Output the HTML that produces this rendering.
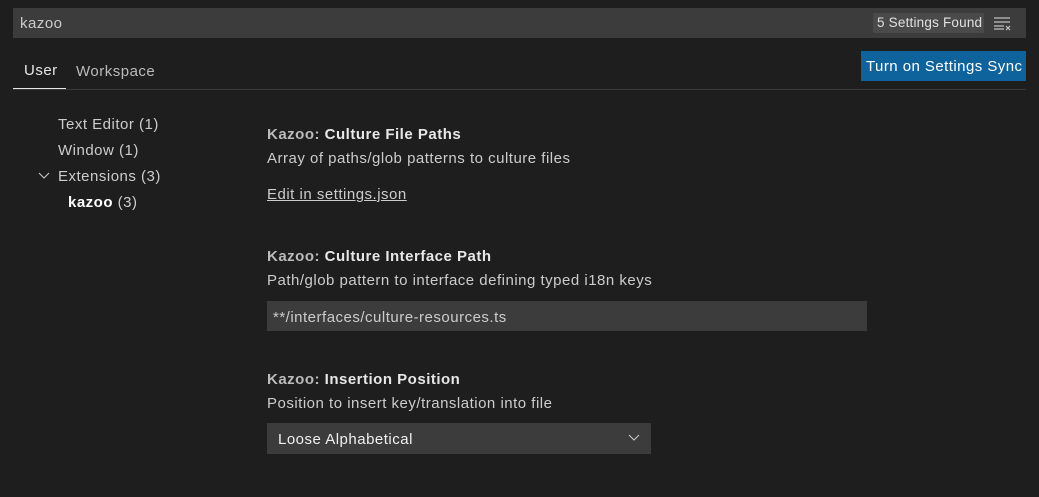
<!DOCTYPE html>
<html><head><style>
body{margin:0;width:1039px;height:497px;background:#1e1e1e;font-family:"Liberation Sans",sans-serif;font-size:15px;letter-spacing:0.5px;color:#cccccc;position:relative;overflow:hidden}
.a{position:absolute;white-space:nowrap}
</style></head><body>
<div class="a" style="left:13px;top:8px;width:1013px;height:30px;background:#3c3c3c"></div>
<div class="a" style="left:20px;top:15px;color:#ccc">kazoo</div>
<div class="a" style="left:873px;top:13px;width:111px;height:20px;background:#4a4a4a;border-radius:2px"></div>
<div class="a" style="left:877px;top:15px;font-size:13.5px;letter-spacing:0.2px;color:#e0e0e0">5 Settings Found</div>
<svg class="a" style="left:992px;top:15px" width="20" height="16"><g stroke="#c5c5c5" stroke-width="1.2"><line x1="2" y1="3" x2="18" y2="3"/><line x1="2" y1="7" x2="18" y2="7"/><line x1="2" y1="11" x2="12" y2="11"/><line x1="2" y1="14" x2="12" y2="14"/><line x1="14" y1="11" x2="18" y2="15"/><line x1="18" y1="11" x2="14" y2="15"/></g></svg>
<div class="a" style="left:24px;top:62px;color:#e7e7e7">User</div>
<div class="a" style="left:76px;top:63px;color:#bbb">Workspace</div>
<div class="a" style="left:13px;top:89px;width:1013px;height:1px;background:#3a3a3a"></div>
<div class="a" style="left:13px;top:88px;width:53px;height:1px;background:#e7e7e7"></div>
<div class="a" style="left:861px;top:51px;width:165px;height:30px;background:#0e639c"></div>
<div class="a" style="left:866px;top:58px;color:#fff;letter-spacing:0.45px">Turn on Settings Sync</div>
<div class="a" style="left:58px;top:116px">Text Editor (1)</div>
<div class="a" style="left:58px;top:142px">Window (1)</div>
<svg class="a" style="left:38px;top:171px" width="12" height="10"><path d="M1 2 L6 7 L11 2" stroke="#ccc" fill="none"/></svg>
<div class="a" style="left:58px;top:168px">Extensions (3)</div>
<div class="a" style="left:68px;top:194px"><b style="color:#fff">kazoo</b> (3)</div>
<div class="a" style="left:267px;top:126px"><span style="color:#bbb;font-weight:bold">Kazoo: </span><b style="color:#e7e7e7">Culture File Paths</b></div>
<div class="a" style="left:267px;top:150px">Array of paths/glob patterns to culture files</div>
<div class="a" style="left:267px;top:186px;text-decoration:underline">Edit in settings.json</div>
<div class="a" style="left:267px;top:248px"><span style="color:#bbb;font-weight:bold">Kazoo: </span><b style="color:#e7e7e7">Culture Interface Path</b></div>
<div class="a" style="left:267px;top:272px">Path/glob pattern to interface defining typed i18n keys</div>
<div class="a" style="left:267px;top:301px;width:600px;height:30px;background:#3c3c3c"></div>
<div class="a" style="left:273px;top:309px">**/interfaces/culture-resources.ts</div>
<div class="a" style="left:267px;top:371px"><span style="color:#bbb;font-weight:bold">Kazoo: </span><b style="color:#e7e7e7">Insertion Position</b></div>
<div class="a" style="left:267px;top:395px">Position to insert key/translation into file</div>
<div class="a" style="left:267px;top:423px;width:384px;height:31px;background:#3c3c3c"></div>
<div class="a" style="left:278px;top:431px;color:#f0f0f0">Loose Alphabetical</div>
<svg class="a" style="left:628px;top:433px" width="12" height="10"><path d="M1 2 L6 7 L11 2" stroke="#ccc" fill="none"/></svg>
</body></html>
